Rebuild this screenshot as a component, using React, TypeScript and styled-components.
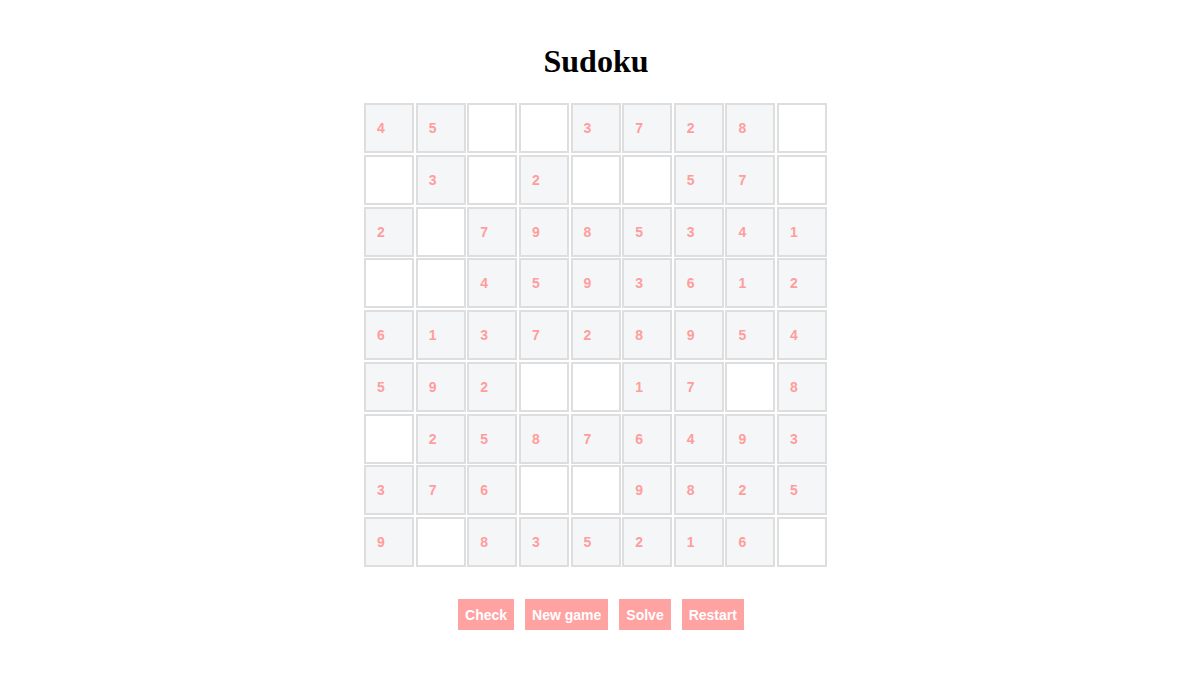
import React from "react";
import styled, { createGlobalStyle } from "styled-components";

const GlobalStyle = createGlobalStyle`
  html, body { margin: 0; padding: 0; background: #ffffff; }
  body { font-family: "Liberation Sans", Arial, sans-serif; }
`;

const Page = styled.div`
  display: flex;
  flex-direction: column;
  align-items: center;
  padding-top: 43px;
`;

const Title = styled.h1`
  margin: 0 0 23px 0;
  font-family: "Liberation Serif", "Times New Roman", serif;
  font-size: 32px;
  font-weight: bold;
  color: #000;
  line-height: normal;
`;

const Board = styled.div`
  display: grid;
  grid-template-columns: repeat(9, 50px);
  grid-auto-rows: 50px;
  column-gap: 1.625px;
  row-gap: 1.75px;
  margin-right: 1px;
`;

const Cell = styled.div<{ $filled: boolean }>`
  box-sizing: border-box;
  width: 50px;
  height: 50px;
  border: 2px solid #dedede;
  background: ${(p) => (p.$filled ? "#f5f6f8" : "#ffffff")};
  display: flex;
  align-items: center;
  padding-left: 11px;
  font-family: "Liberation Sans", Arial, sans-serif;
  font-weight: bold;
  font-size: 14px;
  color: #ff9d9d;
`;

const ButtonRow = styled.div`
  display: flex;
  gap: 11px;
  margin-top: 32px;
  padding-left: 10px;
`;

const Button = styled.button`
  height: 31px;
  padding: 0 7px;
  border: none;
  background: #ffa2a2;
  color: #ffffff;
  font-family: "Liberation Sans", Arial, sans-serif;
  font-weight: bold;
  font-size: 14px;
  cursor: pointer;
`;

const grid = [
  "45__3728_",
  "_3_2__57_",
  "2_7985341",
  "__4593612",
  "613728954",
  "592__17_8",
  "_25876493",
  "376__9825",
  "9_835216_",
];

export default function App() {
  return (
    <>
      <GlobalStyle />
      <Page>
        <Title>Sudoku</Title>
        <Board>
          {grid.map((row, r) =>
            row.split("").map((ch, c) => (
              <Cell key={`${r}-${c}`} $filled={ch !== "_"}>
                {ch !== "_" ? ch : ""}
              </Cell>
            ))
          )}
        </Board>
        <ButtonRow>
          <Button>Check</Button>
          <Button>New game</Button>
          <Button>Solve</Button>
          <Button>Restart</Button>
        </ButtonRow>
      </Page>
    </>
  );
}
